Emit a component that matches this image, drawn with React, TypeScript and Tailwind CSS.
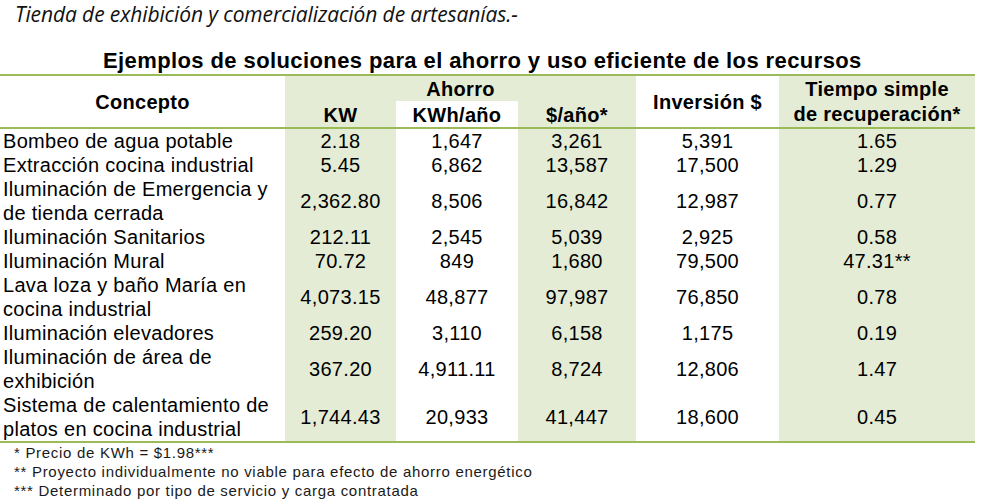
const rows: { concepto: string[]; kw: string; kwh: string; pesos: string; inversion: string; tiempo: string }[] = [
  { concepto: ["Bombeo de agua potable"], kw: "2.18", kwh: "1,647", pesos: "3,261", inversion: "5,391", tiempo: "1.65" },
  { concepto: ["Extracción cocina industrial"], kw: "5.45", kwh: "6,862", pesos: "13,587", inversion: "17,500", tiempo: "1.29" },
  { concepto: ["Iluminación de Emergencia y", "de tienda cerrada"], kw: "2,362.80", kwh: "8,506", pesos: "16,842", inversion: "12,987", tiempo: "0.77" },
  { concepto: ["Iluminación Sanitarios"], kw: "212.11", kwh: "2,545", pesos: "5,039", inversion: "2,925", tiempo: "0.58" },
  { concepto: ["Iluminación Mural"], kw: "70.72", kwh: "849", pesos: "1,680", inversion: "79,500", tiempo: "47.31**" },
  { concepto: ["Lava loza y baño María en", "cocina industrial"], kw: "4,073.15", kwh: "48,877", pesos: "97,987", inversion: "76,850", tiempo: "0.78" },
  { concepto: ["Iluminación elevadores"], kw: "259.20", kwh: "3,110", pesos: "6,158", inversion: "1,175", tiempo: "0.19" },
  { concepto: ["Iluminación de área de", "exhibición"], kw: "367.20", kwh: "4,911.11", pesos: "8,724", inversion: "12,806", tiempo: "1.47" },
  { concepto: ["Sistema de calentamiento de", "platos en cocina industrial"], kw: "1,744.43", kwh: "20,933", pesos: "41,447", inversion: "18,600", tiempo: "0.45" },
];

const green = "bg-[#e4ecd5]";

export default function App() {
  return (
    <div className="w-[992px] h-[501px] bg-white text-black overflow-hidden font-['Liberation_Sans',Arial,sans-serif]">
      <p className="pl-[15px] italic text-[21px] leading-[28px] tracking-[-0.1px] font-['Open_Sans',sans-serif] text-[#111]">
        Tienda de exhibición y comercialización de artesanías.-
      </p>

      <h1 className="mt-[21px] w-[975px] pl-[103px] whitespace-nowrap font-bold text-[22px] leading-[24px] tracking-[0.4px]">
        Ejemplos de soluciones para el ahorro y uso eficiente de los recursos
      </h1>

      <table className="mt-px w-[975px] table-fixed border-collapse text-[20px] tracking-[0.3px]">
        <colgroup>
          <col className="w-[285px]" />
          <col className="w-[111px]" />
          <col className="w-[122px]" />
          <col className="w-[118px]" />
          <col className="w-[143px]" />
          <col className="w-[196px]" />
        </colgroup>
        <thead className="border-y-2 border-[#9bbb59] font-bold">
          <tr className="h-[23px]">
            <th rowSpan={2} className="align-middle leading-[24px] font-bold">Concepto</th>
            <th colSpan={3} className={`${green} leading-[23px] pt-[2px] font-bold`}>Ahorro</th>
            <th rowSpan={2} className="align-middle leading-[24px] font-bold">Inversión $</th>
            <th rowSpan={2} className={`${green} align-middle leading-[25px] font-bold`}>
              Tiempo simple
              <br />
              de recuperación*
            </th>
          </tr>
          <tr className="h-[26px]">
            <th className={`${green} leading-[24px] pt-[2px] font-bold`}>KW</th>
            <th className="leading-[24px] pt-[2px] font-bold">KWh/año</th>
            <th className={`${green} leading-[24px] pt-[2px] font-bold`}>$/año*</th>
          </tr>
        </thead>
        <tbody className="border-b-2 border-[#9bbb59] leading-[24px]">
          {rows.map((r) => (
            <tr key={r.concepto.join(" ")}>
              <td className="pl-[3px] whitespace-nowrap">
                {r.concepto.map((line) => (
                  <div key={line}>{line}</div>
                ))}
              </td>
              <td className={`${green} text-center`}>{r.kw}</td>
              <td className="text-center">{r.kwh}</td>
              <td className={`${green} text-center`}>{r.pesos}</td>
              <td className="text-center">{r.inversion}</td>
              <td className={`${green} text-center`}>{r.tiempo}</td>
            </tr>
          ))}
        </tbody>
      </table>

      <div className="pl-[14px] text-[15px] leading-[19px] text-[#1a1a1a] tracking-[0.7px]">
        <p>* Precio de KWh = $1.98***</p>
        <p>** Proyecto individualmente no viable para efecto de ahorro energético</p>
        <p>*** Determinado por tipo de servicio y carga contratada</p>
      </div>
    </div>
  );
}
